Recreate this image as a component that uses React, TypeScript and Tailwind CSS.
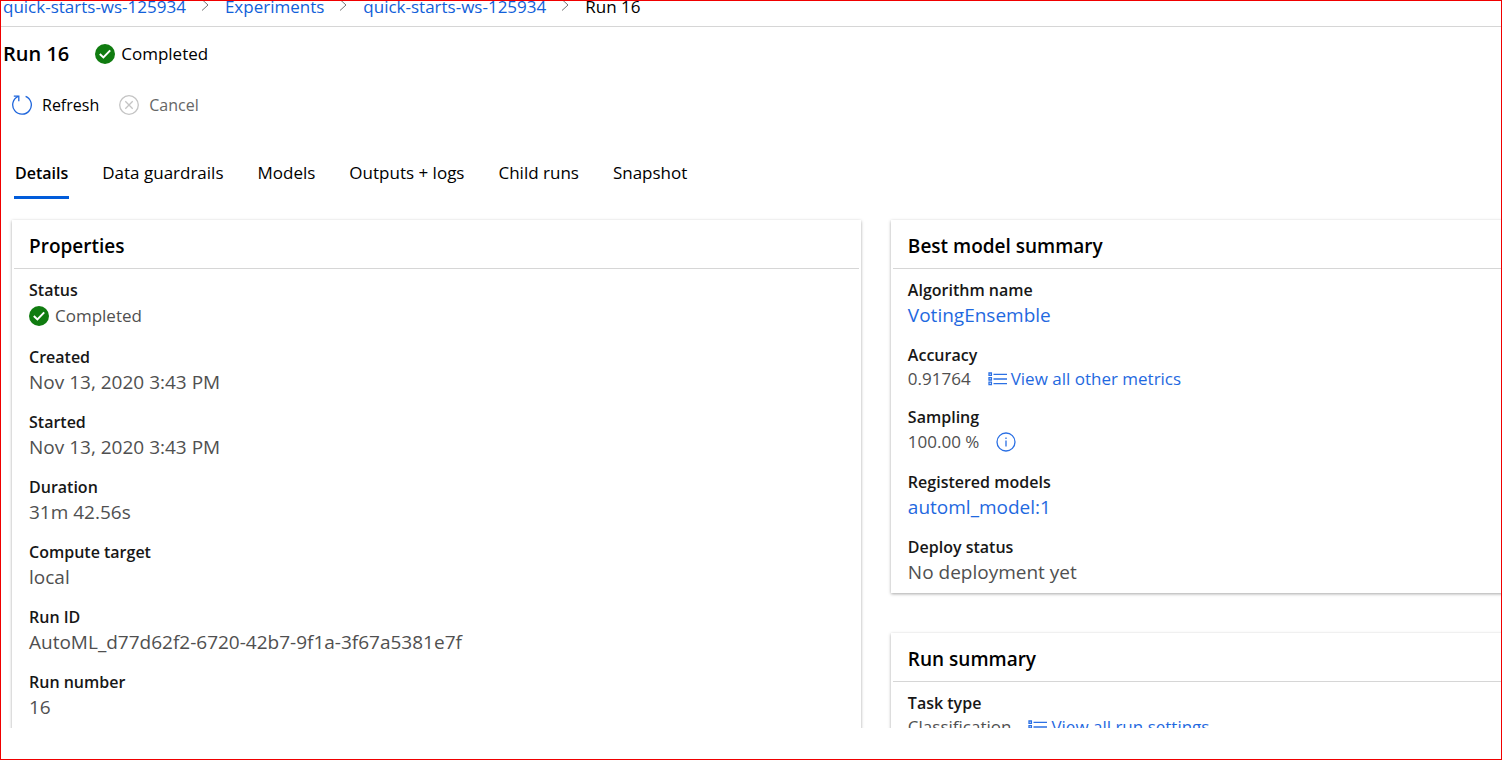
import type { ReactNode } from "react";

function CheckBadge() {
  return (
    <svg viewBox="0 0 20 20" className="size-5 shrink-0" aria-hidden="true">
      <circle cx="10" cy="10" r="10" fill="#107c10" />
      <path d="M4.8 10 8.4 13.4 15.2 6.4" fill="none" stroke="#fff" strokeWidth="2" />
    </svg>
  );
}

function RefreshIcon() {
  return (
    <svg viewBox="0 0 20 20" className="size-5 shrink-0" fill="none" stroke="#1f66dc" strokeWidth="1.3" aria-hidden="true">
      <path d="M13.6 1.3a9.3 9.3 0 1 1-7.4.1" />
      <path d="M1.8 1.2h5v5" />
    </svg>
  );
}

function CancelIcon() {
  return (
    <svg viewBox="0 0 20 20" className="size-5 shrink-0" fill="none" stroke="#c4c4c4" strokeWidth="1.3" aria-hidden="true">
      <circle cx="10" cy="10" r="9.3" />
      <path d="m6.3 6.3 7.4 7.4M13.7 6.3l-7.4 7.4" />
    </svg>
  );
}

function ListIcon() {
  return (
    <svg viewBox="0 0 19 14" className="h-3.5 w-[19px] shrink-0" fill="none" stroke="#2b70e4" strokeWidth="1.3" aria-hidden="true">
      <path d="M1 1h2.4v2.4H1zM1 5.6h2.4V8H1zM1 10.2h2.4v2.4H1z" />
      <path d="M5.5 2.4H19M5.5 7H19M5.5 11.6H19" />
    </svg>
  );
}

function InfoIcon() {
  return (
    <svg viewBox="0 0 20 20" className="size-5" fill="none" stroke="#2b70e4" strokeWidth="1.3" aria-hidden="true">
      <circle cx="10" cy="10" r="9" />
      <path d="M10 8.5v6M10 5.5v1.5" />
    </svg>
  );
}

function Chevron() {
  return (
    <svg viewBox="0 0 8 12" className="mb-2 h-3 w-2 shrink-0" fill="none" stroke="#767676" aria-hidden="true">
      <path d="m1 .5 6 5.5-6 5.5" />
    </svg>
  );
}

function Card({ title, children }: { title: string; children: ReactNode }) {
  return (
    <section className="bg-white px-0.5 pb-2 shadow-[0_1px_3px_rgba(0,0,0,0.35)]">
      <h2 className="border-b border-[#d6d6d6] px-[15px] pt-3 pb-2 text-[19px] leading-7 font-semibold text-black">{title}</h2>
      <dl className="flex flex-col gap-[15px] px-[15px] pt-[9px]">{children}</dl>
    </section>
  );
}

function Field({ label, children }: { label: string; children: ReactNode }) {
  return (
    <div>
      <dt className="text-base leading-6 font-semibold text-[#171717]">{label}</dt>
      {children}
    </div>
  );
}

function Value({ children }: { children: ReactNode }) {
  return <dd className="text-[19px] leading-[26px] text-[#505050]">{children}</dd>;
}

const crumbs = ["quick-starts-ws-125934", "Experiments", "quick-starts-ws-125934"];
const tabs = ["Details", "Data guardrails", "Models", "Outputs + logs", "Child runs", "Snapshot"];
const properties = [
  ["Created", "Nov 13, 2020 3:43 PM"],
  ["Started", "Nov 13, 2020 3:43 PM"],
  ["Duration", "31m 42.56s"],
  ["Compute target", "local"],
  ["Run ID", "AutoML_d77d62f2-6720-42b7-9f1a-3f67a5381e7f"],
  ["Run number", "16"],
];

export default function App() {
  return (
    <div className="flex h-screen flex-col overflow-hidden border border-[#f00000] bg-white pb-[31px] font-['Open_Sans','Noto_Sans',sans-serif] text-[17px] text-black">
      <nav aria-label="Breadcrumb" className="h-[26px] shrink-0 overflow-hidden border-b border-[#d6d6d6]">
        <ol className="flex h-full items-end gap-4 pb-[7px] pl-0.5 leading-6">
          {crumbs.map((crumb, i) => (
            <li key={i} className="flex items-end gap-[15px]">
              <a href="#" className="text-[#1160d9]">{crumb}</a>
              <Chevron />
            </li>
          ))}
          <li aria-current="page">Run 16</li>
        </ol>
      </nav>

      <main className="flex min-h-0 flex-1 flex-col overflow-hidden">
        <header className="flex shrink-0 items-center gap-[26px] pt-[11px] pl-0.5">
          <h1 className="text-xl leading-8 font-semibold">Run 16</h1>
          <p className="flex items-center gap-1.5">
            <CheckBadge />
            Completed
          </p>
        </header>

        <div className="flex shrink-0 gap-5 pt-[23px] pl-[11px] text-base leading-6">
          <button type="button" className="flex items-center gap-2.5">
            <RefreshIcon />
            Refresh
          </button>
          <button type="button" disabled className="flex items-center gap-2.5 text-[#666]">
            <CancelIcon />
            Cancel
          </button>
        </div>

        <div role="tablist" className="flex shrink-0 gap-8 pt-[33px] pl-[13px] leading-[46px]">
          {tabs.map((tab, i) => (
            <button
              key={tab}
              type="button"
              role="tab"
              aria-selected={i === 0}
              className={i === 0 ? "border-b-3 border-[#015cda] px-px text-base leading-[46px] font-semibold" : "border-b-3 border-transparent px-px"}
            >
              {tab}
            </button>
          ))}
        </div>

        <div className="grid shrink-0 grid-cols-[32fr_23fr] gap-[30px] pt-[21px] pl-[11px]">
          <Card title="Properties">
            <Field label="Status">
              <dd className="flex h-7 items-center gap-1.5 text-[#505050]">
                <CheckBadge />
                Completed
              </dd>
            </Field>
            {properties.map(([label, value]) => (
              <Field key={label} label={label}>
                <Value>{value}</Value>
              </Field>
            ))}
          </Card>

          <div className="-mr-1 flex flex-col gap-10">
            <Card title="Best model summary">
              <Field label="Algorithm name">
                <Value><a href="#" className="text-[#1f69e0]">VotingEnsemble</a></Value>
              </Field>
              <Field label="Accuracy">
                <dd className="flex gap-[17px] leading-[23px] text-[#505050]">
                  0.91764
                  <a href="#" className="flex items-center gap-1 text-[#1f69e0]"><ListIcon />View all other metrics</a>
                </dd>
              </Field>
              <Field label="Sampling">
                <dd className="flex items-center gap-[17px] leading-[26px] text-[#505050]">
                  100.00 %
                  <button type="button" aria-label="Sampling information"><InfoIcon /></button>
                </dd>
              </Field>
              <Field label="Registered models">
                <Value><a href="#" className="text-[#1f69e0]">automl_model:1</a></Value>
              </Field>
              <Field label="Deploy status">
                <Value>No deployment yet</Value>
              </Field>
            </Card>

            <Card title="Run summary">
              <Field label="Task type">
                <dd className="flex gap-[17px] leading-[23px] text-[#505050]">
                  Classification
                  <a href="#" className="flex items-center gap-1 text-[#1f69e0]"><ListIcon />View all run settings</a>
                </dd>
              </Field>
            </Card>
          </div>
        </div>
      </main>
    </div>
  );
}
